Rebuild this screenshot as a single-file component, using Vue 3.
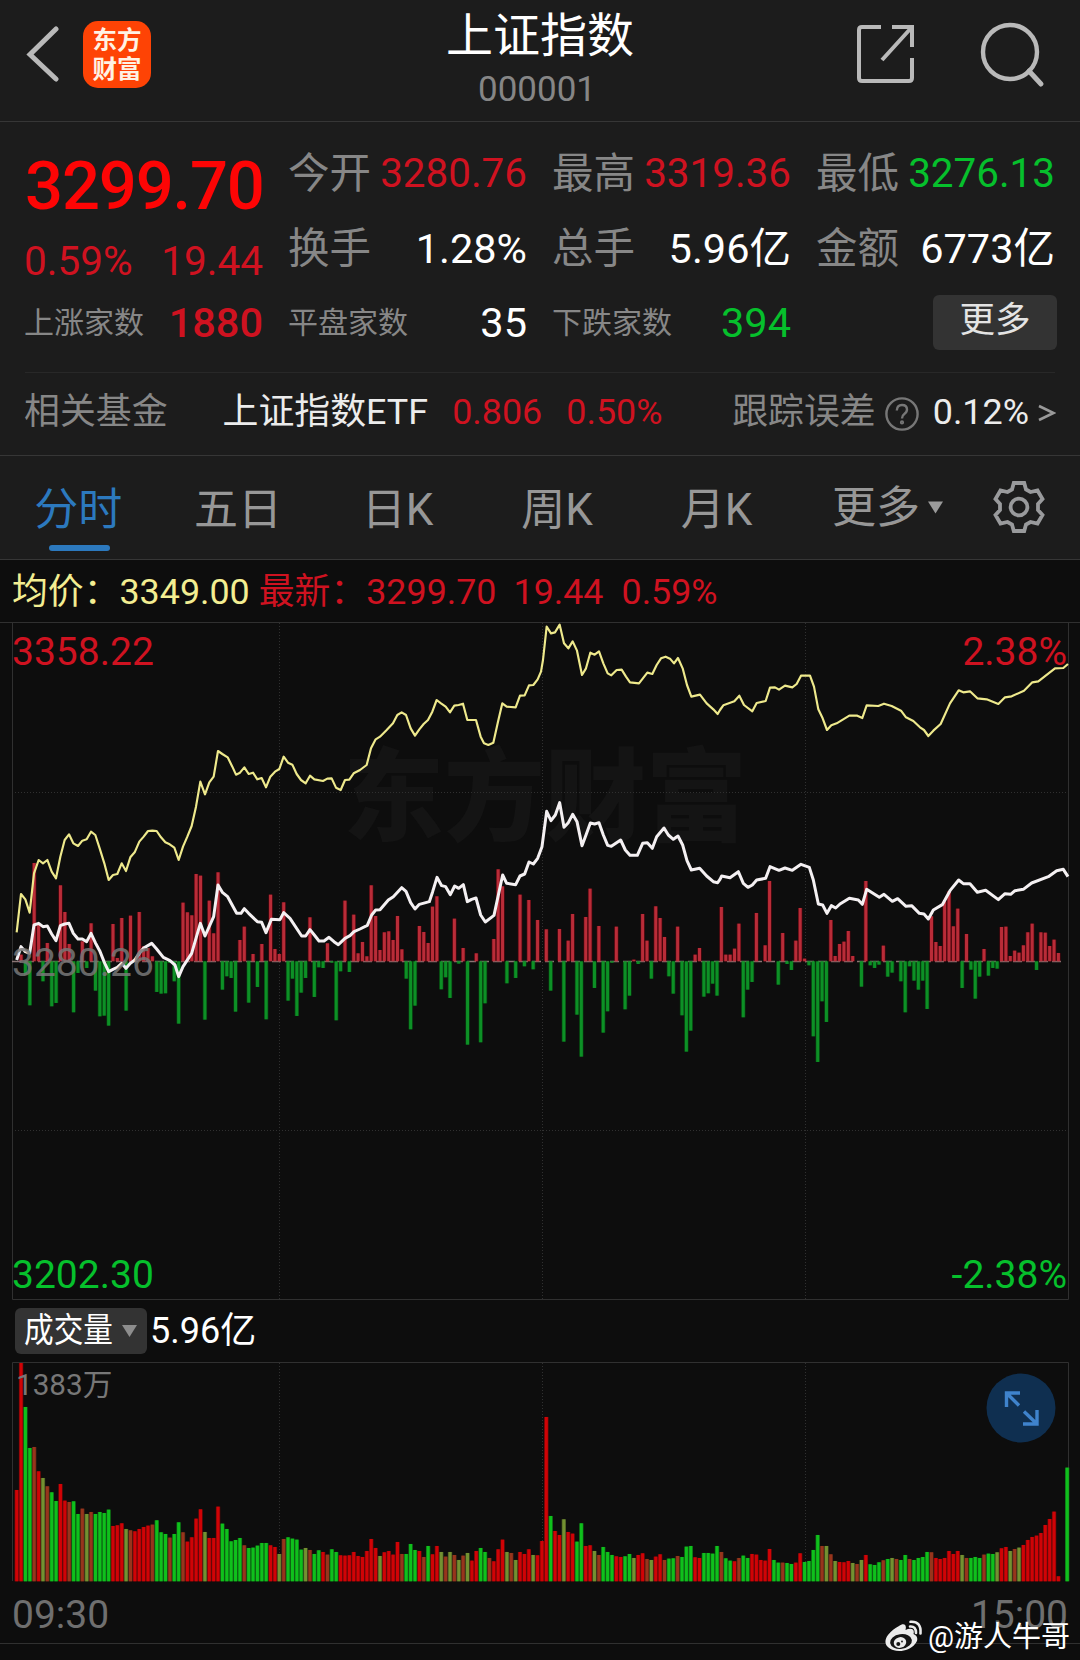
<script setup>
const STEP = 4.377
const FIRST = 16.7

// Per-minute momentum, in thirds of a pixel above (+) or below (-) the previous close
const momentum = [
  0, 20, -40, -132, 295, 110, -60, 55, -135, -125, 228, 148, 52, -153, -35, 60, -20, 114, -88, -165,
  -163, -193, 112, 10, 130, -148, 137, 5, 148, 45, 40, 15, -92, -97, -96, -5, -60, -187, 176, 147,
  138, 262, 257, -175, 182, 84, 267, -85, -45, -50, -151, 64, 104, -124, 22, -77, 52, -174, 200, 37,
  22, 177, -118, -52, -164, -94, -50, 132, -107, -18, -20, 54, -4, -177, -30, 182, -32, 140, 24, 58,
  15, 228, 136, 34, 87, 90, 64, 136, 36, -52, -204, -133, 106, 88, 55, 164, 195, -84, -48, -110,
  128, -7, 40, -250, 0, 24, -243, -126, 0, 67, 276, 225, -66, 0, -50, 200, -15, 184, -24, 124,
  0, 96, -88, 0, 97, -241, 62, 142, -160, -286, 133, 218, -80, 106, -214, -150, -4, 104, 0, -144,
  -103, 5, -8, 142, 62, -52, 165, 130, 73, -45, -97, 104, -162, -271, -208, 20, 40, -106, -96, -67,
  -103, 163, 20, 20, 38, 113, -168, -85, -62, 145, 0, 48, 241, 0, -70, 85, -8, -26, 62, 160,
  8, -12, -225, -302, -120, -182, 124, 16, 52, 59, 91, 16, 0, -76, 241, -12, -20, -10, 47, -46,
  -34, 0, -60, -153, -15, -58, -85, -58, -143, 135, 58, 46, 180, 210, 105, 158, -80, 82, -25, -112,
  -46, 37, -43, -20, -22, 103, 104, 16, 32, 26, 48, 87, 113, -26, 87, 86, 46, 65, 25
]

// Per-minute volume: tone letter followed by height in thirds of a pixel
const volume = (
  'R274 R655 G523 G400 b403 R330 o310 b285 G267 G241 R292 R242 b238 G240 G202 b218 o202 b208 G202 G208 ' +
  'G205 G215 R166 R168 R174 o157 b153 R150 R157 R163 R167 b170 G183 G147 G142 b131 G142 G177 b147 R119 ' +
  'R132 R188 R216 o148 R130 R130 R224 G173 G157 G120 G124 G130 b108 G100 G101 G107 G115 G115 R108 R103 ' +
  'o82 b127 G132 G128 G125 G95 o100 b94 G82 G93 R88 b80 G96 G88 R78 R77 R78 R88 R76 R73 ' +
  'R91 R127 R100 o76 R87 R91 R80 R118 b82 G82 G112 G94 R91 b73 G106 R81 R106 o88 b74 o88 ' +
  'b79 o64 b77 o85 R62 R91 G100 G88 b70 R60 R96 R125 o88 b85 o64 R88 R82 R96 o79 R78 ' +
  'R121 R493 G196 R151 R139 o186 R148 R143 G119 G174 R106 R108 o91 b79 G103 G88 G79 R75 R73 G75 ' +
  'G82 o70 R79 R84 b67 o64 R74 R81 b64 G68 G69 b76 G73 G104 G106 R72 R70 G85 G85 G83 ' +
  'G106 b88 G69 G62 R60 b70 G77 G70 R82 R80 R64 R62 R97 G64 G56 b56 G55 G52 R56 R84 ' +
  'G58 G61 G94 G139 b106 o106 b81 o61 R58 R57 R61 o55 b52 o64 R79 G51 G49 G57 b63 G67 ' +
  'o70 b67 G64 G79 b67 G64 G70 G73 G88 b87 R70 R67 R70 R91 R82 R91 o79 b70 G70 G73 ' +
  'G70 b80 G83 G82 o87 R99 R103 o91 b97 o101 R109 R124 R133 R137 R145 R169 R187 R209 R15 R0 G341'
).split(' ')

const tones = { R: 'vr', G: 'vg', b: 'vb', o: 'vo' }

const momentumBars = momentum
  .map((v, i) => ({ x: FIRST + i * STEP, v: v / 3 }))
  .filter((b) => b.v !== 0)
  .map((b) => ({ x: b.x, y: b.v > 0 ? 341.3 - b.v : 341.3, h: Math.abs(b.v), up: b.v > 0 }))

const volumeBars = volume.map((s, i) => ({
  x: FIRST + i * STEP,
  h: +s.slice(1) / 3,
  tone: tones[s[0]]
}))

const averagePoints =
  '50,937 63,822 76,838 89,878 102,760 116,720 129,730 142,720 155,755 168,775 181,710 194,660 207,643 220,670 234,678 247,662 260,658 273,635 286,645 299,685 313,730 326,780 339,765 352,762 365,730 378,753 391,712 404,697 418,665 431,650 444,633 457,632 470,633 483,652 496,667 509,673 523,683 536,720 549,680 562,650 575,618 588,560 601,485 615,523 628,487 641,470 654,393 667,402 683,412 697,440 708,464 720,458 733,442 746,462 759,458 772,478 785,474 798,502 811,470 825,455 838,447 851,410 864,428 877,434 890,462 903,480 917,490 930,467 943,478 969,483 982,476 995,475 1008,503 1022,510 1035,480 1048,479 1061,460 1080,450 1100,435 1113,385 1127,358 1140,350 1160,330 1179,310 1192,285 1205,277 1218,285 1232,325 1245,347 1258,328 1271,312 1284,300 1297,275 1310,240 1323,250 1337,260 1350,277 1363,257 1376,255 1389,251 1402,300 1428,300 1442,350 1452,370 1465,375 1480,368 1494,305 1507,250 1520,260 1547,262 1560,227 1574,226 1587,196 1600,195 1613,178 1623,155 1629,120 1640,20 1653,40 1665,37 1679,14 1692,70 1705,85 1718,64 1731,92 1746,165 1758,145 1771,98 1784,104 1797,94 1810,130 1823,160 1834,166 1850,150 1865,149 1878,170 1890,187 1917,190 1942,158 1957,162 1970,135 1983,115 1997,110 2010,116 2022,130 2034,114 2048,145 2061,195 2074,230 2100,224 2120,250 2140,268 2153,282 2160,270 2170,256 2203,244 2218,227 2232,255 2257,274 2270,249 2297,243 2310,203 2325,202 2337,209 2355,197 2377,202 2390,192 2403,167 2430,167 2442,200 2455,268 2468,295 2481,330 2494,316 2510,310 2548,287 2572,287 2587,294 2600,256 2635,258 2652,251 2675,258 2703,272 2718,292 2740,303 2760,322 2772,330 2785,348 2800,332 2822,312 2850,250 2876,211 2890,217 2910,214 2932,235 2960,238 2995,252 3015,232 3035,229 3072,212 3097,187 3115,184 3165,145 3190,144 3204,132'

const pricePoints =
  '50,1020 63,980 76,995 89,1000 102,915 116,910 129,920 142,918 155,942 168,962 181,917 194,912 207,910 220,940 234,957 247,957 260,965 273,940 286,968 299,992 313,1027 326,1055 339,1048 352,1042 365,1030 378,1045 391,1030 404,1020 418,1000 431,984 455,970 470,987 490,1012 510,1022 525,1035 536,1070 549,1040 575,1000 601,910 615,948 641,890 654,795 668,818 683,830 710,880 723,880 733,866 746,880 772,905 785,907 798,938 814,898 840,899 851,878 870,895 905,948 917,948 930,929 943,945 957,963 972,963 987,952 1002,965 1015,974 1035,955 1050,947 1062,935 1080,927 1102,916 1115,885 1127,870 1140,869 1165,840 1180,830 1205,803 1218,814 1232,848 1245,867 1258,853 1288,845 1298,815 1311,772 1325,797 1337,800 1351,824 1364,798 1376,805 1390,794 1402,845 1415,838 1428,834 1442,885 1456,906 1482,886 1508,765 1520,790 1547,794 1560,768 1574,762 1587,726 1600,732 1613,715 1626,680 1640,574 1653,602 1666,585 1679,548 1692,622 1705,608 1718,583 1731,605 1746,677 1758,645 1771,609 1784,612 1797,608 1810,645 1823,676 1834,679 1862,660 1876,690 1890,706 1912,706 1928,670 1942,668 1957,685 1970,650 1992,624 2005,645 2020,658 2034,648 2048,675 2061,722 2074,750 2099,745 2120,768 2140,785 2153,788 2160,778 2165,768 2190,773 2215,755 2230,790 2244,802 2257,795 2270,780 2297,775 2310,740 2337,751 2355,744 2377,751 2403,733 2428,742 2440,780 2455,852 2468,855 2481,880 2494,857 2507,864 2520,852 2548,835 2575,840 2587,853 2600,808 2638,832 2652,823 2677,844 2693,836 2718,859 2735,857 2758,880 2772,882 2785,897 2800,870 2827,854 2850,812 2876,780 2890,791 2910,791 2932,817 2957,811 2995,839 3015,821 3032,823 3045,812 3070,808 3095,789 3145,770 3170,752 3190,748 3204,770'

const tabs = ['分时', '五日', '日K', '周K', '月K']
</script>

<template>
  <div class="page">
    <header class="top">
      <div class="side left">
        <svg class="back" width="34" height="58" viewBox="0 0 34 58">
          <path d="M31 4 L5 29.5 L31 54" fill="none" stroke="#b9b9b9" stroke-width="5" stroke-linecap="round" />
        </svg>
        <div class="logo"><span>东方<br />财富</span></div>
      </div>
      <div class="title">
        <h1>上证指数</h1>
        <p>000001</p>
      </div>
      <div class="side right">
        <svg width="60" height="60" viewBox="0 0 60 60" fill="none" stroke="#b9b9b9" stroke-width="4">
          <path d="M25 3 H6 Q3 3 3 6 V54 Q3 57 6 57 H53 Q56 57 56 54 V34" />
          <path d="M36 3 H56 V23 M56 3 L26 36" />
        </svg>
        <svg width="66" height="66" viewBox="0 0 66 66" fill="none" stroke="#b9b9b9" stroke-width="4.4">
          <circle cx="30" cy="30" r="27" />
          <path d="M49 49 L61 62" stroke-width="5" stroke-linecap="round" />
        </svg>
      </div>
    </header>

    <section class="stats">
      <div class="col main">
        <b class="big">3299.70</b>
        <div class="pair red"><span>0.59%</span><span>19.44</span></div>
        <div class="cell small"><i>上涨家数</i><span class="red strong">1880</span></div>
      </div>
      <div class="col">
        <div class="cell price"><i>今开</i><span class="red">3280.76</span></div>
        <div class="cell"><i>换手</i><span>1.28%</span></div>
        <div class="cell small"><i>平盘家数</i><span>35</span></div>
      </div>
      <div class="col">
        <div class="cell price"><i>最高</i><span class="red">3319.36</span></div>
        <div class="cell"><i>总手</i><span>5.96亿</span></div>
        <div class="cell small"><i>下跌家数</i><span class="green">394</span></div>
      </div>
      <div class="col">
        <div class="cell price"><i>最低</i><span class="green">3276.13</span></div>
        <div class="cell"><i>金额</i><span>6773亿</span></div>
        <div class="cell end"><button class="more">更多</button></div>
      </div>
    </section>

    <section class="fund">
      <span class="gray">相关基金</span>
      <span class="name">上证指数ETF</span>
      <span class="red v1">0.806</span>
      <span class="red v2">0.50%</span>
      <span class="gray track">跟踪误差</span>
      <svg class="help" width="36" height="36" viewBox="0 0 36 36" fill="none" stroke="#777" stroke-width="2.4">
        <circle cx="18" cy="18" r="15.6" />
        <path d="M12.8 14.5 Q13 9 18 9 Q23 9 23 13.6 Q23 16.2 20.3 18 Q18 19.6 18 22.6" />
        <circle cx="18" cy="26.4" r="0.9" />
      </svg>
      <span class="err">0.12%</span>
      <svg class="chev" width="18" height="18" viewBox="0 0 18 18" fill="none" stroke="#999" stroke-width="2.6">
        <path d="M1 2 L15.500 9 L1 16" />
      </svg>
    </section>

    <nav class="tabs">
      <div v-for="(t, i) in tabs" :key="t" class="tab" :class="{ on: i === 0 }">{{ t }}</div>
      <div class="tab dropdown">更多<svg width="15" height="13" viewBox="0 0 16 13"><path d="M0 0 H16 L8 13 Z" fill="#9a9a9a" /></svg></div>
      <svg class="gear" width="54" height="56" viewBox="-27 -28 54 56" fill="none" stroke="#999a9c" stroke-width="3.8">
        <path d="M-5.200 -24 H5.200 L7 -17.500 L11.500 -15 L18.500 -16.500 L23.500 -8 L19 -3 V3 L23.500 8 L18.500 16.500 L11.500 15 L7 17.500 L5.200 24 H-5.200 L-7 17.500 L-11.500 15 L-18.500 16.500 L-23.500 8 L-19 3 V-3 L-23.500 -8 L-18.500 -16.500 L-11.500 -15 L-7 -17.500 Z" />
        <circle r="8.400" />
      </svg>
    </nav>

    <div class="legend">
      <span class="yellow">均价：3349.00</span>
      <span class="red last">最新：3299.70</span>
      <span class="red">19.44</span>
      <span class="red pct">0.59%</span>
    </div>

    <section class="chart">
      <svg width="1080" height="680" viewBox="0 2 1080 680">
        <text class="mark" x="545" y="213" text-anchor="middle">东方财富</text>
        <g class="frame">
          <path d="M0 2.500 H1080 M12.500 2 V679.500 H1068.500 V2" />
        </g>
        <g class="grid">
          <path d="M12 172.500 H1068 M12 510.500 H1068 M279.500 3 V679 M542.500 3 V679 M805.500 3 V679" />
        </g>
        <path d="M12 341.500 H1062" stroke="#8a7474" stroke-width="1.500" stroke-dasharray="9 4" />
        <g v-for="(b, i) in momentumBars" :key="i" :class="b.up ? 'mu' : 'md'">
          <rect :x="b.x - 2.2" :y="b.y" width="4.4" :height="b.h" class="halo" />
          <rect :x="b.x - 1.5" :y="b.y" width="3" :height="b.h" />
        </g>
        <g transform="scale(0.33333)" fill="none" stroke-linejoin="round">
          <polyline :points="averagePoints" stroke="#eee98c" stroke-width="6.500" />
          <polyline :points="pricePoints" stroke="#f4f0f2" stroke-width="9" />
        </g>
        <text class="mid" x="12" y="356">3280.26</text>
      </svg>
      <span class="lab tl red">3358.22</span>
      <span class="lab tr red">2.38%</span>
      <span class="lab bl green">3202.30</span>
      <span class="lab br green">-2.38%</span>
    </section>

    <div class="volbar">
      <div class="chip"><span>成交量</span><svg width="15" height="12" viewBox="0 0 15 12"><path d="M0 0 H15 L7.500 12 Z" fill="#8d8d8d" /></svg></div>
      <span class="vol">5.96亿</span>
    </div>

    <section class="volume">
      <svg width="1080" height="221" viewBox="0 0 1080 221">
        <path class="frame" d="M12.500 219 V0.500 H1068.500 V219" />
        <path class="grid" d="M279.500 1 V219 M542.500 1 V219 M805.500 1 V219" />
        <g v-for="(b, i) in volumeBars" :key="i" :class="b.tone">
          <rect :x="b.x - 2.2" :y="219.3 - b.h" width="4.4" :height="b.h" class="halo" />
          <rect :x="b.x - 1.5" :y="219.3 - b.h" width="3" :height="b.h" />
        </g>
      </svg>
      <span class="max">1383万</span>
      <svg class="expand" width="70" height="70" viewBox="0 0 70 70" fill="none" stroke="#3f83cc" stroke-width="3.400">
        <circle cx="35" cy="35" r="34.500" fill="#0f2f50" stroke="none" />
        <path d="M34 20 H20.500 V34 M20.500 20 L33 32.500 M38 38.500 L51 51 M51 37 V51 H37" />
      </svg>
    </section>

    <footer class="times">
      <span>09:30</span>
      <span>15:00</span>
      <div class="credit">
        <svg width="38" height="33" viewBox="0 0 38 33">
          <path d="M14 6 C19 2.500 22 5 20.500 10 C26 7.500 30 9 28.500 14 C33 16 33.500 20 30 24 C25 30.500 15 32.500 8 30 C-1 27 -1 20 3 15 C6 11 10 8 14 6 Z" fill="#ececec" />
          <ellipse cx="16" cy="21.500" rx="11" ry="7.300" fill="#151515" transform="rotate(-8 16 21.500)" />
          <ellipse cx="15" cy="22.500" rx="6.300" ry="5.300" fill="#ececec" transform="rotate(-15 15 22.500)" />
          <circle cx="13.300" cy="24" r="2" fill="#151515" />
          <circle cx="17" cy="21.500" r="0.900" fill="#151515" />
          <path d="M25 6.500 Q31 6 31 13 M25.500 1.800 Q36.500 1 35.500 13.500" fill="none" stroke="#ececec" stroke-width="2.600" stroke-linecap="round" />
        </svg>
        <span>@游人牛哥</span>
      </div>
    </footer>
  </div>
</template>

<style>
body {
  background: #0d0d0d;
}
</style>

<style scoped>
.page {
  width: 1080px;
  height: 1660px;
  overflow: hidden;
  background: #0d0d0d;
  color: #fff;
  font-family: Roboto, "Noto Sans CJK SC", sans-serif;
  font-weight: 400;
  line-height: 1;
}
.page * {
  box-sizing: border-box;
}
svg {
  display: block;
  flex: none;
}
span,
i {
  white-space: nowrap;
}
.red {
  color: #cf1220;
}
.green {
  color: #06c02c;
}
.gray {
  color: #878787;
}
.top {
  display: flex;
  justify-content: space-between;
  height: 122px;
  background: #1c1c1c;
  border-bottom: 1px solid #363636;
}
.side {
  display: flex;
  width: 250px;
}
.left {
  padding: 21px 0 0 25px;
  gap: 24px;
}
.back {
  margin-top: 4px;
}
.logo {
  display: flex;
  align-items: center;
  justify-content: center;
  width: 68px;
  height: 67px;
  padding-bottom: 3px;
  border-radius: 15px;
  background: #fe4305;
  color: #fff2e4;
  font: 700 24.5px/29px "Noto Sans CJK SC", sans-serif;
}
.title {
  display: flex;
  flex-direction: column;
  align-items: center;
  padding-top: 8px;
}
.title h1 {
  margin: 0;
  font-size: 47px;
  font-weight: 400;
  line-height: 56px;
}
.title p {
  margin: 6px 0 0 -6px;
  color: #868686;
  font-size: 35px;
  line-height: 40px;
}
.right {
  justify-content: flex-end;
  padding: 24px 34px 0 0;
  gap: 64px;
}
.right svg:last-child {
  margin-top: -2px;
}
.stats {
  display: grid;
  grid-template-columns: repeat(4, 238px);
  gap: 26px;
  height: 250px;
  padding: 14px 25px 0;
  background: #1c1c1c;
}
.col {
  display: flex;
  flex-direction: column;
}
.cell {
  display: flex;
  align-items: center;
  justify-content: space-between;
  height: 75px;
  font-size: 41.5px;
}
.cell.end {
  justify-content: flex-end;
  height: 73px;
}
.cell i {
  margin-left: -1px;
  color: #878787;
  font-style: normal;
}
.price span {
  font-size: 40.4px;
  padding-top: 2px;
}
.cell.small {
  height: 74px;
}
.cell.small i {
  font-size: 30px;
}
.big {
  display: block;
  height: 86px;
  color: #fd0505;
  font-size: 67px;
  font-weight: 500;
  line-height: 101px;
  letter-spacing: -1.2px;
}
.pair {
  display: flex;
  align-items: center;
  justify-content: space-between;
  height: 64px;
  padding-top: 14px;
  margin-left: -1px;
  font-size: 40.5px;
}
.strong {
  font-weight: 500;
}
.more {
  width: 124px;
  height: 55px;
  margin-right: -2px;
  padding: 0 0 3px;
  border: 0;
  border-radius: 6px;
  background: #333;
  color: #e4e4e4;
  font: inherit;
  font-size: 35.5px;
}
.fund {
  display: flex;
  align-items: center;
  height: 84px;
  padding: 0 25px 2px 24px;
  background: linear-gradient(#282828, #282828) 25px 0 / 1030px 1px no-repeat #1c1c1c;
  border-bottom: 1px solid #363636;
  font-size: 35.9px;
}
.fund .name {
  margin-left: 55px;
  color: #ececec;
}
.fund .v1 {
  margin-left: 24px;
}
.fund .v2 {
  margin-left: 24px;
}
.fund .track {
  margin-left: auto;
}
.fund .help {
  margin: 2px 13px 0 8px;
}
.fund .err {
  color: #ececec;
}
.fund .chev {
  margin: 0 -1px 0 9px;
}
.tabs {
  display: flex;
  align-items: center;
  height: 104px;
  background: #1c1c1c;
  border-bottom: 1px solid #363636;
  font-size: 44px;
}
.tab {
  position: relative;
  width: 159.600px;
  height: 103px;
  padding-right: 3px;
  line-height: 108px;
  text-align: center;
  color: #979797;
}
.tab.on {
  color: #2c79be;
}
.tab.on::after {
  content: "";
  position: absolute;
  left: 49px;
  bottom: 8px;
  width: 61px;
  height: 6px;
  border-radius: 3px;
  background: #2c79be;
}
.dropdown {
  display: flex;
  align-items: center;
  gap: 8px;
  padding-left: 34px;
  width: 193px;
}
.gear {
  margin: -1px 0 0 1px;
}
.legend {
  display: flex;
  height: 62px;
  font-size: 35.85px;
  line-height: 64px;
  padding-left: 12px;
}
.yellow {
  color: #f3ee92;
}
.last {
  margin: 0 17px 0 9px;
}
.pct {
  margin-left: 18px;
}
.chart {
  position: relative;
  height: 680px;
}
.frame {
  fill: none;
  stroke: #303030;
  stroke-width: 1;
}
.grid {
  fill: none;
  stroke: #303030;
  stroke-width: 1;
  stroke-dasharray: 1 2;
}
.mark {
  fill: #141414;
  font: 900 101px "Noto Sans CJK SC", sans-serif;
}
.mid {
  fill: #777;
  font-size: 39px;
  opacity: 0.85;
}
.halo {
  opacity: 0.5;
}
.mu {
  fill: #b92c38;
}
.md {
  fill: #0d9026;
}
.mu .halo {
  fill: #900010;
}
.md .halo {
  fill: #007010;
}
.vr {
  fill: #d00306;
}
.vg {
  fill: #0fc01c;
}
.vb {
  fill: #97351c;
}
.vo {
  fill: #739131;
}
.lab {
  position: absolute;
  font-size: 39px;
  line-height: 46px;
}
.tl {
  left: 12px;
  top: 7px;
}
.tr {
  right: 13px;
  top: 7px;
}
.bl {
  left: 12px;
  bottom: 4px;
}
.br {
  right: 13px;
  bottom: 4px;
}
.volbar {
  display: flex;
  align-items: center;
  height: 60px;
  padding: 0 0 2px 15px;
  gap: 3px;
}
.chip {
  display: flex;
  align-items: center;
  width: 132px;
  height: 46px;
  padding-left: 9px;
  border-radius: 6px;
  background: #333;
}
.chip span {
  width: 98px;
  font-size: 34px;
  line-height: 42px;
  padding-bottom: 2px;
  transform: scaleX(0.872);
  transform-origin: 0 50%;
}
.vol {
  font-size: 36px;
}
.volume {
  position: relative;
  height: 221px;
}
.max {
  position: absolute;
  left: 16px;
  top: 6px;
  color: #777;
  font-size: 29.700px;
  line-height: 34px;
}
.expand {
  position: absolute;
  left: 986px;
  top: 11px;
}
.times {
  position: relative;
  display: flex;
  justify-content: space-between;
  height: 61px;
  padding: 0 12px;
  border-bottom: 1px solid #303030;
  color: #6f6f6f;
  font-size: 39px;
  line-height: 65px;
}
.credit {
  position: absolute;
  right: 10px;
  top: 34px;
  display: flex;
  align-items: center;
  gap: 5px;
  color: #fff;
  font-size: 29px;
  line-height: 38px;
}
.credit span {
  padding-top: 1px;
}
</style>
